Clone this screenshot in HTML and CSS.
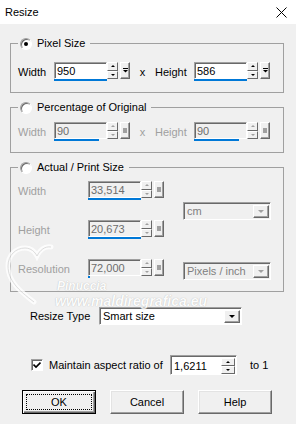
FILE: index.html
```html
<!DOCTYPE html>
<html lang="en">
<head>
    <meta charset="UTF-8">
    <title>Resize</title>
    <link rel="stylesheet" href="styles.css">
</head>
<body>
    <div class="titlebar">
        <span class="title">Resize</span>
        <svg class="close" width="11" height="11" viewBox="0 0 11 11"><path d="M0.5 0.5L10.5 10.5M10.5 0.5L0.5 10.5" stroke="#000" stroke-width="1" fill="none"/></svg>
    </div>

    <div class="dialog">
        <fieldset class="group first">
            <legend><span class="radio checked"></span>Pixel Size</legend>
            <div class="pair-row">
                <span class="lbl lbl-w">Width</span>
                <div class="spin-field">
                    <div class="entry">
                        <div class="box">950</div>
                        <div class="bar" style="width: 100%"></div>
                    </div>
                    <div class="spin"><span class="up"></span><span class="down"></span></div>
                    <span class="extra"><svg width="5" height="6" viewBox="0 0 5 6"><path d="M0 0.5H5" stroke="#000"/><path d="M0 2H5L2.5 4.5Z" fill="#000"/></svg></span>
                </div>
                <span class="times">x</span>
                <span class="lbl lbl-h">Height</span>
                <div class="spin-field">
                    <div class="entry">
                        <div class="box">586</div>
                        <div class="bar" style="width: 100%"></div>
                    </div>
                    <div class="spin"><span class="up"></span><span class="down"></span></div>
                    <span class="extra"><svg width="5" height="6" viewBox="0 0 5 6"><path d="M0 0.5H5" stroke="#000"/><path d="M0 2H5L2.5 4.5Z" fill="#000"/></svg></span>
                </div>
            </div>
        </fieldset>

        <fieldset class="group second">
            <legend><span class="radio"></span>Percentage of Original</legend>
            <div class="pair-row">
                <span class="lbl lbl-w dim">Width</span>
                <div class="spin-field disabled">
                    <div class="entry">
                        <div class="box">90</div>
                        <div class="bar" style="width: 84%"></div>
                    </div>
                    <div class="spin"><span class="up"></span><span class="down"></span></div>
                    <span class="extra"><span class="block"></span></span>
                </div>
                <span class="times dim">x</span>
                <span class="lbl lbl-h dim">Height</span>
                <div class="spin-field disabled">
                    <div class="entry">
                        <div class="box">90</div>
                        <div class="bar" style="width: 84%"></div>
                    </div>
                    <div class="spin"><span class="up"></span><span class="down"></span></div>
                    <span class="extra"><span class="block"></span></span>
                </div>
            </div>
        </fieldset>

        <fieldset class="group third">
            <legend><span class="radio"></span>Actual / Print Size</legend>
            <div class="print-grid">
                <span class="lbl dim">Width</span>
                <div class="spin-field disabled">
                    <div class="entry">
                        <div class="box">33,514</div>
                        <div class="bar" style="width: 100%"></div>
                    </div>
                    <div class="spin"><span class="up"></span><span class="down"></span></div>
                    <span class="extra"><span class="block"></span></span>
                </div>
                <div class="combo disabled unit">
                    <span class="combo-text">cm</span>
                    <span class="combo-btn"><span class="tri"></span></span>
                </div>

                <span class="lbl dim">Height</span>
                <div class="spin-field disabled">
                    <div class="entry">
                        <div class="box">20,673</div>
                        <div class="bar" style="width: 100%"></div>
                    </div>
                    <div class="spin"><span class="up"></span><span class="down"></span></div>
                    <span class="extra"><span class="block"></span></span>
                </div>

                <span class="lbl dim">Resolution</span>
                <div class="spin-field disabled">
                    <div class="entry">
                        <div class="box">72,000</div>
                        <div class="bar" style="width: 3%"></div>
                    </div>
                    <div class="spin"><span class="up"></span><span class="down"></span></div>
                    <span class="extra"><span class="block"></span></span>
                </div>
                <div class="combo disabled res-unit">
                    <span class="combo-text">Pixels / inch</span>
                    <span class="combo-btn"><span class="tri"></span></span>
                </div>
            </div>
        </fieldset>

        <div class="type-row">
            <span class="type-lbl">Resize Type</span>
            <div class="combo type">
                <span class="combo-text">Smart size</span>
                <span class="combo-btn"><span class="tri"></span></span>
            </div>
        </div>

        <div class="aspect-row">
            <span class="check"><svg width="8" height="8" viewBox="0 0 8 8"><path d="M0.5 3.5L3 6L7.5 1.5" stroke="#000" stroke-width="1.6" fill="none"/></svg></span>
            <span class="aspect-lbl">Maintain aspect ratio of</span>
            <div class="ratio">
                <span class="ratio-text">1,6211</span>
                <div class="spin"><span class="up"></span><span class="down"></span></div>
            </div>
            <span class="to-one">to 1</span>
        </div>

        <div class="buttons">
            <button class="btn default"><span class="focus">OK</span></button>
            <button class="btn">Cancel</button>
            <button class="btn">Help</button>
        </div>
    </div>

    <div class="watermark">
        <svg class="wm-heart" width="56" height="66" viewBox="0 0 56 66"><path d="M30 62C14 50 4 40 4 26C4 15 12 8 21 8C27 8 31 12 33 16C36 10 41 6 47 7" fill="none" stroke="#ffffff" stroke-width="5" stroke-linecap="round"/><path d="M30 62C14 50 4 40 4 26C4 15 12 8 21 8C27 8 31 12 33 16C36 10 41 6 47 7" fill="none" stroke="#d8d8d8" stroke-width="1"/></svg>
        <span class="wm-name">Pinuccia</span>
        <span class="wm-site">www.maldiregrafica.eu</span>
    </div>
</body>
</html>
```

FILE: styles.css
```css
body {
    margin: 0;
    width: 296px;
    height: 424px;
    background: #f0f0f0;
    font-family: "Liberation Sans", Arial, sans-serif;
    font-size: 11px;
    color: #000;
    position: relative;
    overflow: hidden;
}
.titlebar {
    height: 24px;
    background: #fff;
    display: flex;
    align-items: center;
    justify-content: space-between;
    padding: 0 9px 0 5px;
}
.title {
    font-size: 11px;
}
.dialog {
    padding: 13px 12px 0 10px;
}

/* group boxes */
.group {
    margin: 0;
    padding: 0 0 11px 7px;
    border: 1px solid #a0a0a0;
    width: 274px;
    box-sizing: border-box;
    min-width: 0;
}
.group legend {
    display: flex;
    align-items: center;
    height: 13px;
    line-height: 13px;
    padding: 0 5px 0 2px;
    font-weight: normal;
}
.second {
    margin-top: 8px;
}
.third {
    margin-top: 8px;
    padding-bottom: 12px;
}
.first .pair-row {
    margin-top: 12px;
}
.second .pair-row {
    margin-top: 8px;
}
.radio {
    width: 12px;
    height: 12px;
    box-sizing: border-box;
    border-radius: 50%;
    border: 1px solid;
    border-color: #a0a0a0 #fff #fff #a0a0a0;
    box-shadow: inset 1px 1px 0 #696969;
    background: #fff;
    margin-right: 5px;
    display: flex;
    align-items: center;
    justify-content: center;
}
.radio.checked::after {
    content: "";
    width: 4px;
    height: 4px;
    border-radius: 50%;
    background: #000;
}

.pair-row {
    display: flex;
    align-items: center;
}
.lbl {
    white-space: nowrap;
}
.lbl-w {
    width: 36px;
}
.lbl-h {
    width: 39px;
}
.times {
    width: 25px;
    text-align: center;
}
.dim {
    color: #a0a0a0;
}

/* spin field */
.spin-field {
    display: flex;
    align-items: flex-start;
    width: 76px;
    height: 19px;
}
.entry {
    width: 53px;
}
.box {
    height: 17px;
    box-sizing: border-box;
    border: 1px solid;
    border-color: #a0a0a0 #fff #fff #a0a0a0;
    box-shadow: inset 1px 1px 0 #696969;
    background: #fff;
    padding-left: 2px;
    line-height: 16px;
}
.bar {
    height: 2px;
    background: #0078d7;
}
.spin {
    width: 11px;
    height: 17px;
    display: flex;
    flex-direction: column;
}
.spin span {
    flex: 1;
    box-sizing: border-box;
    border: 1px solid;
    border-color: #fff #696969 #696969 #fff;
    background: #f0f0f0;
    display: flex;
    align-items: center;
    justify-content: center;
}
.spin .up::after {
    content: "";
    border-left: 2px solid transparent;
    border-right: 2px solid transparent;
    border-bottom: 2px solid #000;
}
.spin .down::after {
    content: "";
    border-left: 2px solid transparent;
    border-right: 2px solid transparent;
    border-top: 2px solid #000;
}
.extra {
    width: 10px;
    height: 17px;
    margin-left: 2px;
    box-sizing: border-box;
    border: 1px solid;
    border-color: #fff #696969 #696969 #fff;
    box-shadow: inset -1px -1px 0 #a0a0a0;
    display: flex;
    align-items: center;
    justify-content: center;
}
.extra .block {
    width: 4px;
    height: 5px;
    background: #a0a0a0;
}
.disabled .box {
    background: #f0f0f0;
    color: #6d6d6d;
}
.disabled .spin .up::after {
    border-bottom-color: #a0a0a0;
}
.disabled .spin .down::after {
    border-top-color: #a0a0a0;
}

/* print size grid */
.print-grid {
    display: grid;
    grid-template-columns: 70px 95px 88px;
    grid-template-rows: 20px 20px 20px;
    row-gap: 19px;
    margin-top: 7px;
}
.print-grid .lbl {
    align-self: center;
}
.print-grid .spin-field {
    align-self: start;
}
.unit {
    grid-column: 3;
    grid-row: 1 / 3;
    align-self: center;
}
.res-unit {
    grid-column: 3;
    grid-row: 3;
    align-self: start;
    margin-top: 3px;
}

/* drop-down lists */
.combo {
    display: flex;
    height: 18px;
    box-sizing: border-box;
    border: 1px solid;
    border-color: #a0a0a0 #fff #fff #a0a0a0;
    box-shadow: inset 1px 1px 0 #696969;
    background: #fff;
    padding: 2px 1px 1px 2px;
}
.combo.disabled {
    background: #f0f0f0;
    color: #808080;
}
.combo-text {
    flex: 1;
    line-height: 13px;
    padding-left: 1px;
}
.combo-btn {
    width: 16px;
    box-sizing: border-box;
    border: 1px solid;
    border-color: #fff #696969 #696969 #fff;
    box-shadow: inset -1px -1px 0 #a0a0a0;
    background: #f0f0f0;
    display: flex;
    align-items: center;
    justify-content: center;
}
.tri {
    border-left: 3px solid transparent;
    border-right: 3px solid transparent;
    border-top: 3px solid #000;
}
.combo.disabled .tri {
    border-top-color: #a0a0a0;
}

.type-row {
    display: flex;
    align-items: center;
    margin-top: 15px;
    padding-left: 20px;
}
.type-lbl {
    width: 69px;
}
.type {
    width: 143px;
    height: 18px;
}

/* aspect ratio */
.aspect-row {
    display: flex;
    align-items: center;
    margin-top: 30px;
    padding-left: 21px;
}
.check {
    width: 12px;
    height: 12px;
    box-sizing: border-box;
    border: 1px solid;
    border-color: #a0a0a0 #fff #fff #a0a0a0;
    box-shadow: inset 1px 1px 0 #696969;
    background: #fff;
    display: flex;
    align-items: center;
    justify-content: center;
}
.aspect-lbl {
    width: 121px;
    margin-left: 6px;
    white-space: nowrap;
}
.ratio {
    display: flex;
    align-items: center;
    width: 67px;
    height: 20px;
    box-sizing: border-box;
    border: 1px solid;
    border-color: #a0a0a0 #fff #fff #a0a0a0;
    box-shadow: inset 1px 1px 0 #696969;
    background: #fff;
    padding: 2px 1px 1px 3px;
}
.ratio-text {
    flex: 1;
}
.ratio .spin {
    width: 14px;
    height: 16px;
}
.to-one {
    margin-left: 13px;
}

/* buttons */
.buttons {
    display: flex;
    gap: 14px;
    margin-top: 15px;
    padding-left: 12px;
}
.btn {
    width: 74px;
    height: 24px;
    padding: 0;
    font-family: inherit;
    font-size: 11px;
    color: #000;
    background: #f0f0f0;
    border: 1px solid;
    border-color: #fff #696969 #696969 #fff;
    box-shadow: inset -1px -1px 0 #a0a0a0, inset 1px 1px 0 #e3e3e3;
    display: flex;
    align-items: center;
    justify-content: center;
}
.btn.default {
    border: 1px solid #000;
    box-shadow: inset 1px 1px 0 #fff, inset -1px -1px 0 #696969, inset -2px -2px 0 #a0a0a0;
    padding: 3px;
}
.focus {
    flex: 1;
    align-self: stretch;
    border: 1px dotted #000;
    display: flex;
    align-items: center;
    justify-content: center;
}

/* watermark */
.watermark {
    position: absolute;
    left: 0;
    top: 238px;
    width: 230px;
    height: 68px;
    opacity: 0.8;
    pointer-events: none;
}
.wm-heart {
    position: absolute;
    left: 4px;
    top: 2px;
}
.wm-name {
    position: absolute;
    left: 57px;
    top: 43px;
    line-height: 10px;
    font-size: 12px;
    font-weight: bold;
    font-style: italic;
    color: #fff;
    text-shadow: 0 0 1px #a0a0a0;
}
.wm-site {
    position: absolute;
    left: 55px;
    top: 58px;
    line-height: 10px;
    font-size: 14px;
    font-weight: bold;
    font-style: italic;
    color: #fff;
    text-shadow: 0 0 1px #a0a0a0;
}
```
